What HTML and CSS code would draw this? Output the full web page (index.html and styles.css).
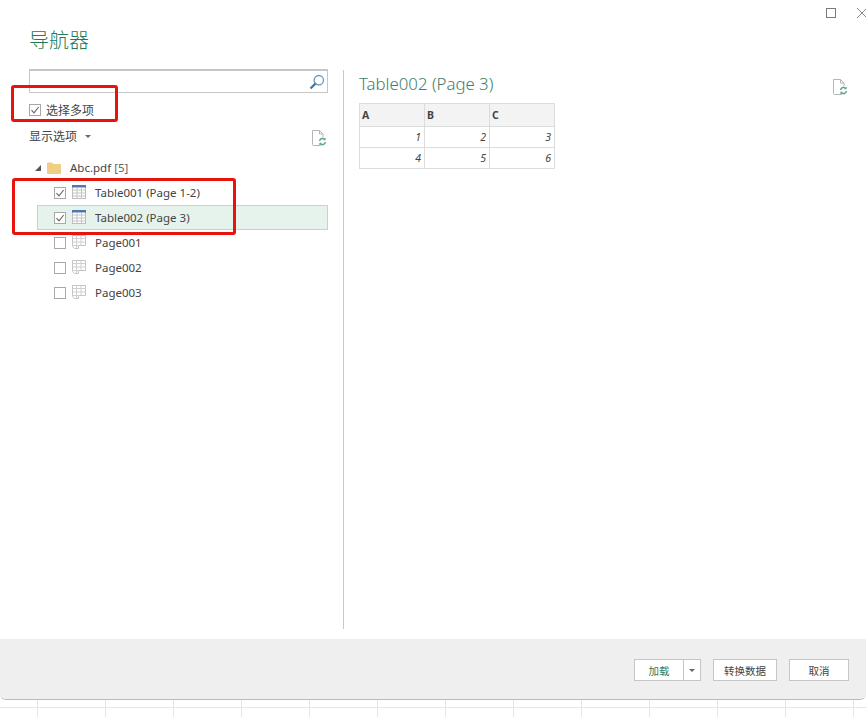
FILE: index.html
```html
<!DOCTYPE html>
<html lang="zh">
<head>
<meta charset="utf-8">
<title>导航器</title>
<link rel="stylesheet" href="styles.css">
</head>
<body>
<svg class="defs" width="0" height="0" aria-hidden="true">
  <symbol id="doc" viewBox="0 0 16 16">
    <path d="M1.5 .5H8.5L12 4V15.5H2.5Q1.5 15.5 1.5 14.5Z M8.5 .5V4H12" fill="#fff" stroke="#b5b5b5" stroke-width="1"/>
    <circle cx="11.5" cy="11.5" r="4.4" fill="#fff"/>
    <path d="M8.6 11A3 3 0 0 1 13.7 9.3M14.4 12A3 3 0 0 1 9.3 13.7" fill="none" stroke="#5aa786" stroke-width="1.5"/>
    <path d="M14.6 7.6V10.2H12ZM8.4 15.4V12.8H11Z" fill="#5aa786"/>
  </symbol>
  <symbol id="tbl" viewBox="0 0 14 14">
    <rect x=".5" y=".5" width="13" height="13" fill="#fff" stroke="#bdbdbd"/>
    <path d="M.5 5H13.5M.5 8H13.5M.5 11H13.5M5 3V14M9.5 3V14" stroke="#c4c4c4" fill="none"/>
    <rect width="14" height="2.5" fill="#4f77ad"/>
  </symbol>
  <symbol id="pg" viewBox="0 0 14 14">
    <path d="M.5 .5H13.5V10.5H6.5V13.5H2.5L.5 11.5Z" fill="#fff" stroke="#c4c4c4"/>
    <path d="M.5 3.5H13.5M.5 7H13.5M.5 10.5H6.5M4.5 .5V13M9 .5V10.5" stroke="#d0d0d0" fill="none"/>
  </symbol>
  <symbol id="chk" viewBox="0 0 12 12">
    <path d="M1.8 6.2L4.8 9.4L10.4 2.4" fill="none" stroke="#666" stroke-width="1.3"/>
  </symbol>
</svg>

<div class="sheet">
  <section class="dialog">
    <div class="winbar">
      <span class="win-max"></span>
      <svg class="win-close" viewBox="0 0 10 10" aria-hidden="true"><path d="M0 0L10 10M10 0L0 10" stroke="#8a8a8a" stroke-width="1" fill="none"/></svg>
    </div>
    <h1 class="title">导航器</h1>

    <div class="main">
      <aside class="left">
        <div class="search">
          <svg class="search-icon" viewBox="0 0 16 16" aria-hidden="true">
            <circle cx="9.8" cy="6.2" r="4.7" fill="none" stroke="#6f94b8" stroke-width="1.3"/>
            <path d="M6.4 9.6L1.5 14.5" stroke="#3f78ad" stroke-width="2.2"/>
          </svg>
        </div>
        <label class="multi">
          <span class="box"><svg class="tick"><use href="#chk"/></svg></span>
          <span>选择多项</span>
        </label>
        <div class="options">
          <span>显示选项</span>
          <span class="caret"></span>
          <svg class="doc-icon left-doc"><use href="#doc"/></svg>
        </div>
        <ul class="tree">
          <li class="row root">
            <span class="expander"></span>
            <svg class="folder" viewBox="0 0 14 12" aria-hidden="true"><path d="M0 1.5Q0 .5 1 .5H5L6.5 2H13Q14 2 14 3V11Q14 12 13 12H1Q0 12 0 11Z" fill="#f0cf85"/></svg>
            <span class="root-label">Abc.pdf <span class="count">[5]</span></span>
          </li>
          <li class="row item">
            <span class="box"><svg class="tick"><use href="#chk"/></svg></span>
            <svg class="node"><use href="#tbl"/></svg>
            <span>Table001 (Page 1-2)</span>
          </li>
          <li class="row item selected">
            <span class="box"><svg class="tick"><use href="#chk"/></svg></span>
            <svg class="node"><use href="#tbl"/></svg>
            <span>Table002 (Page 3)</span>
          </li>
          <li class="row item">
            <span class="box"></span>
            <svg class="node"><use href="#pg"/></svg>
            <span>Page001</span>
          </li>
          <li class="row item">
            <span class="box"></span>
            <svg class="node"><use href="#pg"/></svg>
            <span>Page002</span>
          </li>
          <li class="row item">
            <span class="box"></span>
            <svg class="node"><use href="#pg"/></svg>
            <span>Page003</span>
          </li>
        </ul>
      </aside>

      <div class="divider"></div>

      <main class="preview">
        <div class="preview-head">
          <h2 class="preview-title">Table002 (Page 3)</h2>
          <svg class="doc-icon right-doc"><use href="#doc"/></svg>
        </div>
        <table class="grid">
          <thead>
            <tr><th>A</th><th>B</th><th>C</th></tr>
          </thead>
          <tbody>
            <tr><td>1</td><td>2</td><td>3</td></tr>
            <tr><td>4</td><td>5</td><td>6</td></tr>
          </tbody>
        </table>
      </main>
    </div>

    <footer class="footer">
      <div class="split">
        <button class="btn btn-load" type="button">加载</button>
        <button class="btn btn-drop" type="button"><span class="caret"></span></button>
      </div>
      <button class="btn btn-transform" type="button">转换数据</button>
      <button class="btn btn-cancel" type="button">取消</button>
    </footer>
  </section>

  <div class="mark mark-multi"></div>
  <div class="mark mark-tables"></div>
</div>
</body>
</html>
```

FILE: styles.css
```css
* { box-sizing: border-box; }

html, body {
  margin: 0;
  height: 100%;
  overflow: hidden;
  background: #fff;
}

body {
  font-family: "Noto Sans", "Noto Sans CJK SC", sans-serif;
  font-size: 11.5px;
  color: #444;
}

.defs { position: absolute; }

.sheet {
  position: relative;
  width: 866px;
  height: 717px;
  background-color: #fff;
  background-image:
    linear-gradient(#e6e6e6, #e6e6e6),
    repeating-linear-gradient(90deg, transparent 0, transparent 37px, #e6e6e6 37px, #e6e6e6 38px, transparent 38px, transparent 68px);
  background-size: 100% 1px, 100% 100%;
  background-position: 0 707px, 0 0;
  background-repeat: no-repeat;
}

.dialog {
  display: flex;
  flex-direction: column;
  height: 700px;
  background: #fff;
  border-bottom: 1px solid #b9b9b9;
  border-radius: 0 0 6px 6px;
  overflow: hidden;
}

/* window buttons */
.winbar {
  display: flex;
  align-items: center;
  justify-content: flex-end;
  gap: 21px;
  height: 25px;
  margin-right: -1px;
  flex: none;
}

.win-max {
  width: 10px;
  height: 10px;
  border: 1px solid #7a7a7a;
}

.win-close { width: 10px; height: 10px; }

/* title */
.title {
  margin: 0;
  padding: 1px 0 0 29px;
  height: 44px;
  flex: none;
  font-size: 20px;
  line-height: 30px;
  font-weight: 300;
  color: #217a55;
}

/* main split */
.main {
  display: flex;
  height: 570px;
  flex: none;
}

.left {
  width: 299px;
  margin-left: 29px;
  margin-right: 15px;
  flex: none;
}

.search {
  display: flex;
  align-items: center;
  justify-content: flex-end;
  height: 24px;
  padding-right: 2px;
  border: 1px solid #c6c6c6;
  border-top-width: 2px;
}

.search-icon { width: 16px; height: 16px; }

.multi {
  display: flex;
  align-items: center;
  gap: 5px;
  height: 24px;
  margin-top: 5px;
  font-size: 12px;
  color: #444;
}

.box {
  display: flex;
  align-items: center;
  justify-content: center;
  width: 12px;
  height: 12px;
  border: 1px solid #a8a8a8;
  background: #fff;
  flex: none;
}

.tick { width: 10px; height: 10px; }

.options {
  display: flex;
  align-items: center;
  height: 24px;
  margin-top: 2px;
  margin-bottom: 7px;
  font-size: 12px;
  color: #444;
}

.caret {
  display: inline-block;
  width: 0;
  height: 0;
  border-left: 3px solid transparent;
  border-right: 3px solid transparent;
  border-top: 3px solid #666;
}

.options .caret { margin-left: 8px; }

.doc-icon { width: 16px; height: 16px; }

.left-doc { margin-left: auto; margin-right: 1px; margin-top: 3px; }

.tree {
  list-style: none;
  margin: 0;
  padding: 0;
}

.row {
  display: flex;
  align-items: center;
  height: 25px;
}

.root { padding-left: 6px; }

.expander {
  width: 0;
  height: 0;
  border-style: solid;
  border-width: 0 0 6px 6px;
  border-color: transparent transparent #555 transparent;
  margin-right: 6px;
  flex: none;
}

.folder { width: 14px; height: 12px; margin-right: 9px; flex: none; }

.root-label { color: #444; }

.count { color: #666; }

.item {
  margin-left: 8px;
  padding-left: 16px;
  border: 1px solid transparent;
}

.selected {
  background: #e6f3ec;
  border-color: #b6dcc8;
}

.item .box { margin-right: 6px; }

.node { width: 14px; height: 14px; margin-right: 9px; flex: none; margin-top: -2px; }

.divider {
  width: 1px;
  height: 559px;
  margin-top: 1px;
  background: #c8c8c8;
  flex: none;
}

.preview {
  flex: 1;
  padding-left: 15px;
  padding-right: 18px;
  min-width: 0;
}

.preview-head {
  display: flex;
  justify-content: space-between;
  align-items: center;
  height: 29px;
  margin-bottom: 5px;
}

.preview-title {
  margin: 0;
  font-size: 16.8px;
  font-weight: 300;
  line-height: 29px;
  color: #3f8069;
}

.right-doc { margin-top: 6px; }

.grid {
  border-collapse: collapse;
  table-layout: fixed;
  width: 196px;
  font-size: 10.5px;
}

.grid th, .grid td {
  width: 65px;
  border: 1px solid #dcdcdc;
  padding: 0 3px;
}

.grid th {
  height: 23px;
  padding-left: 2px;
  background: #f3f3f3;
  text-align: left;
  font-weight: 700;
  color: #444;
}

.grid td {
  height: 21px;
  text-align: right;
  font-style: italic;
  color: #444;
}

/* footer */
.footer {
  display: flex;
  align-items: center;
  justify-content: flex-end;
  gap: 12px;
  height: 60px;
  padding-top: 2px;
  padding-right: 17px;
  background: #efefef;
  flex: none;
}

.split { display: flex; }

.btn {
  height: 22px;
  padding: 0;
  background: #fff;
  border: 1px solid #c6c6c6;
  font-family: inherit;
  font-size: 10.5px;
  color: #444;
}

.btn-load { width: 50px; color: #2f7a5a; }

.btn-drop {
  width: 17px;
  border-left: 0;
  display: flex;
  align-items: center;
  justify-content: center;
}

.btn-transform { width: 64px; }

.btn-cancel { width: 60px; }

/* red annotations over the screenshot */
.mark {
  position: absolute;
  border: 3px solid #e8140c;
  border-radius: 3px;
}

.mark-multi { left: 11px; top: 85px; width: 107px; height: 37px; }

.mark-tables { left: 12px; top: 178px; width: 224px; height: 57px; }
```
